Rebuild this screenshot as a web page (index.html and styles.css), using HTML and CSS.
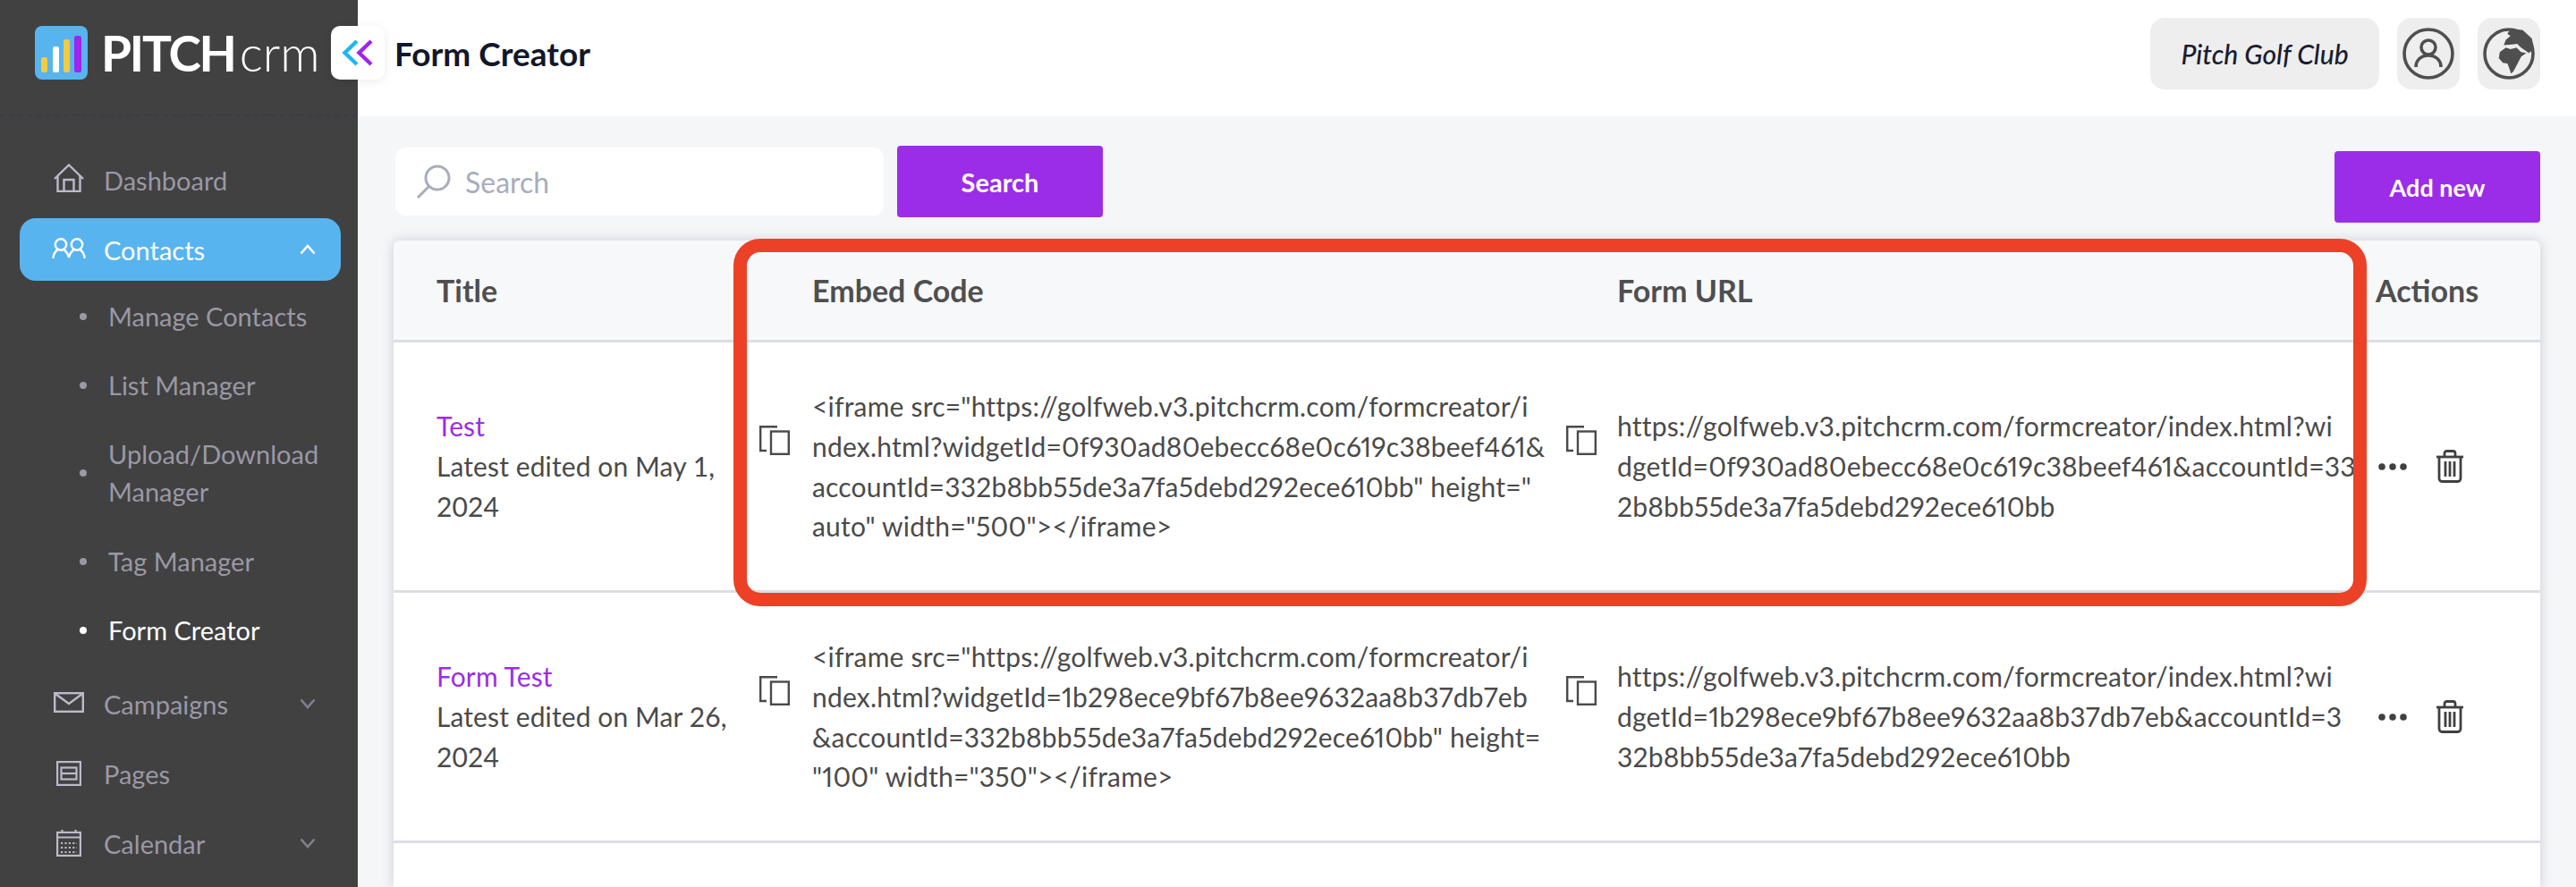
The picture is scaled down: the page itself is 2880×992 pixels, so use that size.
FILE: index.html
```html
<!DOCTYPE html>
<html lang="en">
<head>
<meta charset="utf-8">
<title>Form Creator</title>
<link rel="stylesheet" href="styles.css">
</head>
<body>
<div class="app">
  <aside class="sidebar">
    <div class="brand">
      <svg class="brand-mark" viewBox="0 0 59 60"><rect width="59" height="60" rx="8" fill="#58b4ee"/><rect x="7" y="35" width="7" height="17" rx="2.500" fill="#f4cb3f"/><rect x="20" y="23" width="7" height="29" rx="2.500" fill="#fff"/><rect x="32" y="15" width="7" height="37" rx="2.500" fill="#f4cb3f"/><rect x="44" y="11" width="8" height="41" rx="2.500" fill="#a024f0"/></svg>
      <span class="brand-name"><b>PITCH</b><span class="brand-crm">crm</span></span>
    </div>
    <nav class="nav">
      <a class="nav-item">
        <svg class="icon-home" viewBox="0 0 34 32" fill="none" stroke="#bcbaca" stroke-width="2.400"><path d="M1 17 17 1.500 33 17"/><path d="M4.500 14V31H11.500V18H22.500V31H29.500V14M11.500 31H22.500" stroke-linejoin="miter"/></svg>
        <span class="nav-label">Dashboard</span>
      </a>
      <a class="nav-item active">
        <svg class="icon-people" viewBox="0 0 38 23" fill="none" stroke="#fff" stroke-width="2.400" stroke-linecap="round"><circle cx="10" cy="7.500" r="6.200"/><circle cx="28" cy="7.500" r="6.200"/><path d="M1.500 22C2 17.500 4 15 6.500 13M13.500 13C16 15 18 18 19 22C20 18 22 15 24.500 13M31.500 13C34 15 36 17.500 36.500 22"/></svg>
        <span class="nav-label">Contacts</span>
        <svg class="chev" viewBox="0 0 18 12" fill="none" stroke="#fff" stroke-width="2.600"><path d="M1.500 10.500 9 2l7.500 8.500"/></svg>
      </a>
      <ul class="sub">
        <li class="sub-item">Manage Contacts</li>
        <li class="sub-item">List Manager</li>
        <li class="sub-item sub-tall">Upload/Download<br>Manager</li>
        <li class="sub-item">Tag Manager</li>
        <li class="sub-item current">Form Creator</li>
      </ul>
      <a class="nav-item">
        <svg class="icon-mail" viewBox="0 0 34 23" fill="none" stroke="#bcbaca" stroke-width="2.400"><rect x="1.200" y="1.200" width="31.600" height="20.600"/><path d="M2 2 17 13 32 2"/></svg>
        <span class="nav-label">Campaigns</span>
        <svg class="chev" viewBox="0 0 18 12" fill="none" stroke="#82808c" stroke-width="2.600"><path d="M1.500 1.500 9 10l7.500-8.500"/></svg>
      </a>
      <a class="nav-item">
        <svg class="icon-page" viewBox="0 0 28 28" fill="none" stroke="#bcbaca" stroke-width="2.200"><rect x="1.100" y="1.100" width="25.800" height="25.800"/><rect x="5.500" y="7.500" width="17" height="13"/><path d="M5.500 14H22.500"/></svg>
        <span class="nav-label">Pages</span>
      </a>
      <a class="nav-item">
        <svg class="icon-cal" viewBox="0 0 28 30" fill="none" stroke="#bcbaca" stroke-width="2.200"><rect x="1.100" y="3" width="25.800" height="25.900"/><path d="M1 8.500H27M6.500 0V4M21.500 0V4"/><path d="M5 15h18M5 20h18M5 25h18" stroke-dasharray="2.200 2.200" stroke-width="2.200" stroke="#bcbaca"/></svg>
        <span class="nav-label">Calendar</span>
        <svg class="chev" viewBox="0 0 18 12" fill="none" stroke="#82808c" stroke-width="2.600"><path d="M1.500 1.500 9 10l7.500-8.500"/></svg>
      </a>
    </nav>
  </aside>
  <div class="main">
    <header class="topbar">
      <h1 class="page-title">Form Creator</h1>
      <div class="top-actions">
        <div class="club">Pitch Golf Club</div>
        <div class="round-btn">
          <svg viewBox="0 0 58 58" class="top-icon" fill="none" stroke="#4f4f4f" stroke-width="3.600"><circle cx="29" cy="29" r="27"/><circle cx="29" cy="22" r="8"/><path d="M15 44C15 36 21 31 29 31C37 31 43 36 43 44"/></svg>
        </div>
        <div class="round-btn">
          <svg viewBox="0 0 58 58" class="top-icon"><circle cx="29" cy="29" r="27" fill="none" stroke="#4f4f4f" stroke-width="3.600"/><path d="M30.700 1.700 27.300 6.800 30.700 9.200 25.600 13.600 23.200 19.400 32.400 18.800 38.200 18.100 42.600 22.200 51.200 28.300 57.300 23.900 54.600 11.900 44.300 2.400ZM25.600 22.200 18.800 27.300 17.700 34.100 22.200 39.200 27.300 39.900 29 44.300 31.400 51.200 34.100 48.800 38.200 40.900 42.600 32.400 48.400 28.300 42.600 27.300 37.500 22.200 30.700 23.900Z" fill="#4f4f4f"/></svg>
        </div>
      </div>
    </header>
    <section class="content">
      <div class="toolbar">
        <div class="search-box">
          <svg class="search-icon" viewBox="0 0 40 38" fill="none" stroke="#a9acbd" stroke-width="3"><circle cx="24" cy="15" r="13"/><path d="M14 25 2 37"/></svg>
          <span class="search-text">Search</span>
        </div>
        <button class="btn btn-search">Search</button>
        <button class="btn btn-add">Add new</button>
      </div>
      <div class="table">
        <div class="thead">
          <div class="th th-first">Title</div>
          <div class="th">Embed Code</div>
          <div class="th">Form URL</div>
          <div class="th">Actions</div>
        </div>
        <div class="row">
          <div class="cell-title"><a class="link">Test</a><br>Latest edited on May 1,<br>2024</div>
          <div class="cell-copy"><svg class="copy" viewBox="0 0 34 33" fill="none" stroke="#4a4a4a" stroke-width="2.400"><path d="M20 1.200H1.200V28H8"/><rect x="13" y="6.500" width="19.800" height="25.300"/></svg></div>
          <div class="cell-code">&lt;iframe src="https://golfweb.v3.pitchcrm.com/formcreator/i<br>ndex.html?widgetId=0f930ad80ebecc68e0c619c38beef461&amp;<br>accountId=332b8bb55de3a7fa5debd292ece610bb" height="<br>auto" width="500"&gt;&lt;/iframe&gt;</div>
          <div class="cell-copy"><svg class="copy" viewBox="0 0 34 33" fill="none" stroke="#4a4a4a" stroke-width="2.400"><path d="M20 1.200H1.200V28H8"/><rect x="13" y="6.500" width="19.800" height="25.300"/></svg></div>
          <div class="cell-code">https://golfweb.v3.pitchcrm.com/formcreator/index.html?wi<br>dgetId=0f930ad80ebecc68e0c619c38beef461&amp;accountId=33<br>2b8bb55de3a7fa5debd292ece610bb</div>
          <div class="cell-actions">
            <svg class="dots" viewBox="0 0 32 8" fill="#404040"><circle cx="4" cy="4" r="3.800"/><circle cx="16" cy="4" r="3.800"/><circle cx="28" cy="4" r="3.800"/></svg>
            <svg class="trash" viewBox="0 0 32 37" fill="none" stroke="#404040" stroke-width="2.800"><path d="M1 8H31"/><path d="M10 7V4C10 2.500 11 1.500 12.500 1.500H19.500C21 1.500 22 2.500 22 4V7"/><path d="M4 8V32C4 34 5.500 35.500 7 35.500H25C26.500 35.500 28 34 28 32V8"/><path d="M11 13V30M16 13V30M21 13V30"/></svg>
          </div>
        </div>
        <div class="row">
          <div class="cell-title"><a class="link">Form Test</a><br>Latest edited on Mar 26,<br>2024</div>
          <div class="cell-copy"><svg class="copy" viewBox="0 0 34 33" fill="none" stroke="#4a4a4a" stroke-width="2.400"><path d="M20 1.200H1.200V28H8"/><rect x="13" y="6.500" width="19.800" height="25.300"/></svg></div>
          <div class="cell-code">&lt;iframe src="https://golfweb.v3.pitchcrm.com/formcreator/i<br>ndex.html?widgetId=1b298ece9bf67b8ee9632aa8b37db7eb<br>&amp;accountId=332b8bb55de3a7fa5debd292ece610bb" height=<br>"100" width="350"&gt;&lt;/iframe&gt;</div>
          <div class="cell-copy"><svg class="copy" viewBox="0 0 34 33" fill="none" stroke="#4a4a4a" stroke-width="2.400"><path d="M20 1.200H1.200V28H8"/><rect x="13" y="6.500" width="19.800" height="25.300"/></svg></div>
          <div class="cell-code">https://golfweb.v3.pitchcrm.com/formcreator/index.html?wi<br>dgetId=1b298ece9bf67b8ee9632aa8b37db7eb&amp;accountId=3<br>32b8bb55de3a7fa5debd292ece610bb</div>
          <div class="cell-actions">
            <svg class="dots" viewBox="0 0 32 8" fill="#404040"><circle cx="4" cy="4" r="3.800"/><circle cx="16" cy="4" r="3.800"/><circle cx="28" cy="4" r="3.800"/></svg>
            <svg class="trash" viewBox="0 0 32 37" fill="none" stroke="#404040" stroke-width="2.800"><path d="M1 8H31"/><path d="M10 7V4C10 2.500 11 1.500 12.500 1.500H19.500C21 1.500 22 2.500 22 4V7"/><path d="M4 8V32C4 34 5.500 35.500 7 35.500H25C26.500 35.500 28 34 28 32V8"/><path d="M11 13V30M16 13V30M21 13V30"/></svg>
          </div>
        </div>
        <div class="annotation"></div>
      </div>
    </section>
  </div>
  <div class="collapse">
    <svg viewBox="0 0 36 30" class="collapse-icon" fill="none" stroke-width="4.400"><path d="M17 2 3.500 15 17 28" stroke="#1db8f2"/><path d="M33 2 19.500 15 33 28" stroke="#a024f0"/></svg>
  </div>
</div>
</body>
</html>
```
FILE: styles.css
```css
* { box-sizing: border-box; }
html, body { margin: 0; height: 100%; }
body { font-family: "Lato", "Liberation Sans", sans-serif; color: #4a4a4a; overflow: hidden; background: #f5f6f8; }
.app { position: relative; display: flex; height: 992px; width: 2880px; overflow: hidden; }

.sidebar { width: 400px; flex: none; background: #414141; display: flex; flex-direction: column; }
.brand { height: 130px; padding: 29px 0 0 39px; display: flex; align-items: flex-start; gap: 15px; border-bottom: 2px dashed #3c3b4a; }
.brand-mark { width: 59px; height: 60px; flex: none; }
.brand-name { color: #fff; font-size: 55px; line-height: 60px; font-weight: 700; white-space: nowrap; }
.brand-name b { font-weight: 700; letter-spacing: -2.200px; }
.brand-crm { font-weight: 300; margin-left: 5px; }

.nav { padding: 36px 19px 0 22px; display: flex; flex-direction: column; }
.nav-item { display: flex; align-items: center; height: 70px; padding: 0 28px 0 38px; margin-bottom: 8px; border-radius: 18px; color: #9a98a5; font-size: 29px; position: relative; }
.nav-item.active { background: #58b4ee; color: #fff; margin-bottom: 1px; }
.icon-home { width: 34px; height: 32px; flex: none; margin: -4px 22px 0 0; }
.icon-people { width: 38px; height: 23px; flex: none; margin: -4px 20px 0 -2px; }
.icon-mail { width: 34px; height: 23px; flex: none; margin: -4px 22px 0 0; }
.icon-page { width: 28px; height: 28px; flex: none; margin: 0 25px 0 3px; }
.icon-cal { width: 28px; height: 30px; flex: none; margin: -1px 25px 0 3px; }
.nav-label { flex: 1; }
.chev { width: 18px; height: 12px; flex: none; }

.sub { list-style: none; margin: 0 0 9px; padding: 0; }
.sub-item { position: relative; height: 77px; display: flex; align-items: center; padding-left: 99px; color: #9a98a5; font-size: 29px; line-height: 42px; }
.sub-item::before { content: ""; position: absolute; left: 67px; top: 50%; width: 8px; height: 8px; margin-top: -4px; border-radius: 50%; background: #9a98a5; }
.sub-tall { height: 120px; }
.sub-item.current { color: #fff; }
.sub-item.current::before { background: #fff; }

.main { flex: 1; min-width: 0; display: flex; flex-direction: column; }
.topbar { height: 130px; flex: none; background: #fff; display: flex; align-items: flex-start; justify-content: space-between; padding: 20px 40px 0 41px; }
.page-title { margin: 16px 0 0; font-size: 37px; line-height: 48px; font-weight: 700; color: #12172b; }
.top-actions { display: flex; gap: 20px; }
.club { width: 256px; height: 80px; border-radius: 16px; background: #eeeeee; display: flex; align-items: center; justify-content: center; font-size: 30px; font-style: italic; font-weight: 500; color: #1a1c30; }
.round-btn { width: 70px; height: 80px; border-radius: 16px; background: #eeeeee; display: flex; align-items: center; justify-content: center; }
.top-icon { width: 58px; height: 58px; }

.content { flex: 1; padding: 33px 40px 0; display: flex; flex-direction: column; min-height: 0; }
.toolbar { display: flex; align-items: flex-start; height: 86px; margin-bottom: 20px; }
.search-box { width: 546px; height: 76px; margin: 2px 15px 0 2px; background: #fff; border-radius: 12px; display: flex; align-items: center; padding-left: 23px; }
.search-icon { width: 40px; height: 38px; margin-right: 15px; }
.search-text { font-size: 32px; color: #a9acbd; }
.btn { border: 0; border-radius: 4px; background: #9b2de8; color: #fff; font-family: inherit; font-size: 29px; font-weight: 700; height: 80px; width: 230px; padding: 0; }
.btn-add { margin: 6px 0 0 auto; font-size: 27px; }

.table { position: relative; flex: 1; background: #fff; border-radius: 8px 8px 0 0; box-shadow: 0 0 14px rgba(60, 64, 90, .22); }
.thead { display: grid; grid-template-columns: 468px 900px 848px 184px; height: 114px; background: #f7f8fa; border-bottom: 3px solid #dcdde6; border-radius: 8px 8px 0 0; align-items: center; }
.th { font-size: 34px; font-weight: 700; color: #4f4f4f; }
.th-first { padding-left: 48px; }
.row { display: grid; grid-template-columns: 408px 60px 842px 58px 848px 184px; height: 280px; border-bottom: 3px solid #dcdde6; align-items: center; font-size: 30px; line-height: 44.700px; }
.cell-title { padding-left: 48px; white-space: nowrap; letter-spacing: .1px; }
.link { color: #9b2de8; }
.cell-copy { display: flex; height: 100%; align-items: center; }
.copy { width: 34px; height: 33px; margin-top: -58px; margin-left: 1px; }
.cell-code { white-space: nowrap; letter-spacing: .2px; font-variant-numeric: proportional-nums; }
.cell-actions { display: flex; align-items: center; padding-left: 3px; gap: 32px; }
.dots { width: 32px; height: 8px; }
.trash { width: 32px; height: 37px; }

.annotation { position: absolute; left: 380px; top: -2px; width: 1826px; height: 411px; border: 15px solid #ec4126; border-radius: 30px; pointer-events: none; }

.collapse { position: absolute; left: 370px; top: 29px; width: 60px; height: 60px; background: #fff; border-radius: 10px; box-shadow: 0 2px 12px rgba(0,0,0,.08); display: flex; align-items: center; justify-content: center; }
.collapse-icon { width: 36px; height: 30px; }
```
